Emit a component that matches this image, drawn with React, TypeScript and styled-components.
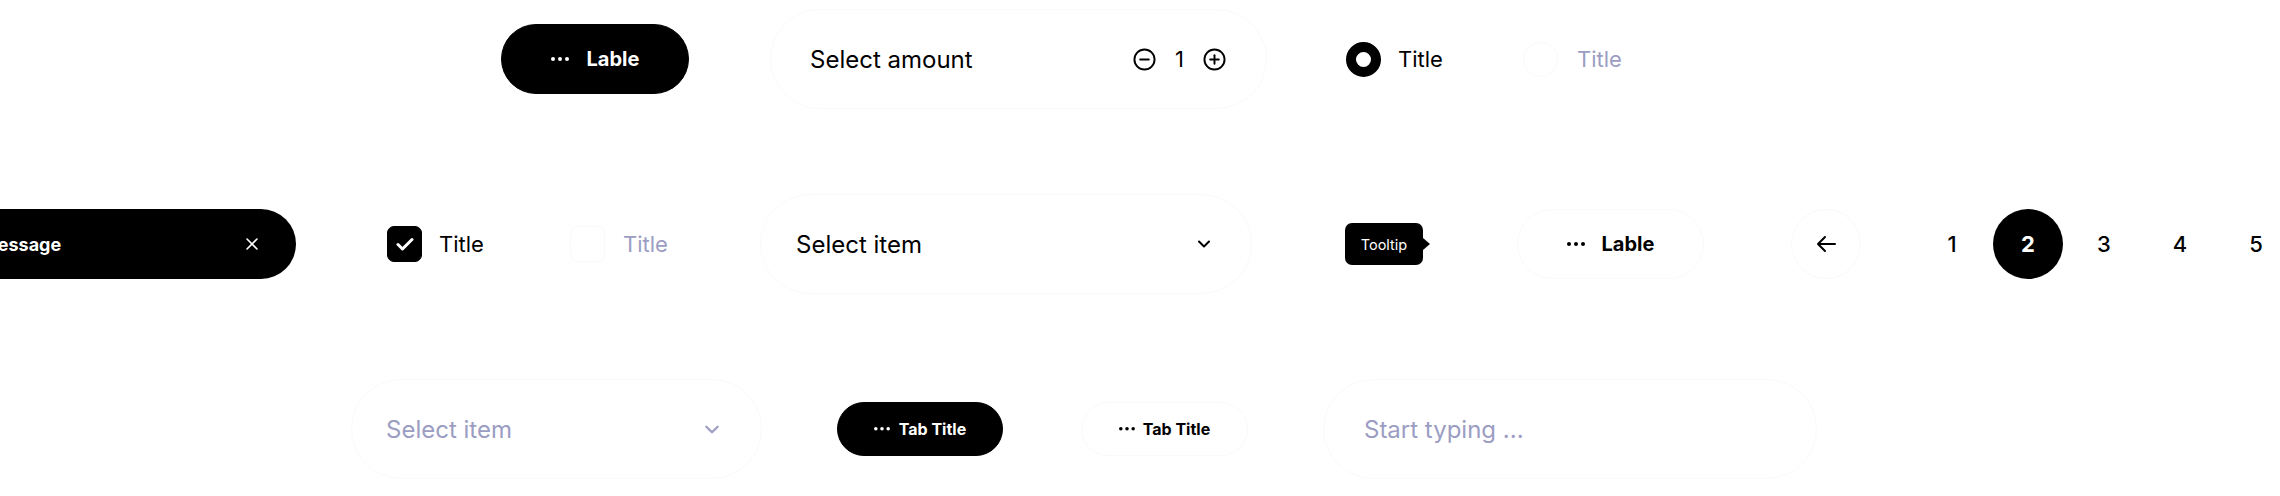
import React from "react";
import styled, { createGlobalStyle, css } from "styled-components";

const GlobalStyle = createGlobalStyle`
  html, body {
    margin: 0;
    padding: 0;
    background: #fff;
  }
  body {
    font-family: Inter, "Noto Sans", sans-serif;
    color: #000;
    overflow: hidden;
  }
`;

const MUTED = "#9b9dc3";
const FAINT = "#fafafb";

type Offset = { $ml?: number };
const offset = css<Offset>`
  margin-left: ${(p) => p.$ml ?? 0}px;
  flex-shrink: 0;
`;

const Canvas = styled.div`
  width: 2280px;
  height: 496px;
  overflow: hidden;
  box-sizing: border-box;
  padding-top: 9px;
  display: flex;
  flex-direction: column;
  gap: 85px;
`;

const Row = styled.div<{ $pl?: number }>`
  display: flex;
  align-items: center;
  height: 100px;
  flex-shrink: 0;
  padding-left: ${(p) => p.$pl ?? 0}px;
`;

const Pill = styled.div<Offset & { $ghost?: boolean; $w: number; $h: number; $size: number; $gap: number }>`
  ${offset};
  display: flex;
  align-items: center;
  justify-content: center;
  gap: ${(p) => p.$gap}px;
  box-sizing: border-box;
  width: ${(p) => p.$w}px;
  height: ${(p) => p.$h}px;
  border-radius: ${(p) => p.$h / 2}px;
  border: 1px solid ${(p) => (p.$ghost ? FAINT : "#000")};
  background: ${(p) => (p.$ghost ? "#fff" : "#000")};
  color: ${(p) => (p.$ghost ? "#000" : "#fff")};
  font-size: ${(p) => p.$size}px;
  font-weight: 700;
`;

const Field = styled.div<Offset & { $w: number; $pl: number; $pr: number }>`
  ${offset};
  display: flex;
  align-items: center;
  justify-content: space-between;
  box-sizing: border-box;
  width: ${(p) => p.$w}px;
  height: 100px;
  padding: 0 ${(p) => p.$pr}px 0 ${(p) => p.$pl}px;
  border: 1px solid ${FAINT};
  border-radius: 50px;
`;

const FieldText = styled.span<{ $muted?: boolean }>`
  font-size: 24px;
  color: ${(p) => (p.$muted ? MUTED : "#000")};
`;

const Stepper = styled.div`
  display: flex;
  align-items: center;
  gap: 19px;
  font-size: 22px;
`;

const Option = styled.div<Offset & { $w: number; $gap: number }>`
  ${offset};
  display: flex;
  align-items: center;
  gap: ${(p) => p.$gap}px;
  width: ${(p) => p.$w}px;
`;

const OptionLabel = styled.span<{ $muted?: boolean }>`
  font-size: 22px;
  color: ${(p) => (p.$muted ? MUTED : "#000")};
`;

const Radio = styled.span<{ $on?: boolean }>`
  box-sizing: border-box;
  width: 35px;
  height: 35px;
  border-radius: 50%;
  border: ${(p) => (p.$on ? "10.5px solid #000" : `1px solid ${FAINT}`)};
  background: #fff;
`;

const Checkbox = styled.span<{ $on?: boolean }>`
  display: flex;
  align-items: center;
  justify-content: center;
  box-sizing: border-box;
  width: 35px;
  height: 36px;
  border-radius: 7px;
  background: ${(p) => (p.$on ? "#000" : "#fff")};
  border: 1px solid ${(p) => (p.$on ? "#000" : FAINT)};
`;

const Snackbar = styled.div<Offset>`
  ${offset};
  display: flex;
  align-items: center;
  justify-content: space-between;
  box-sizing: border-box;
  width: 360px;
  height: 70px;
  padding: 0 38px 0 45px;
  border-radius: 35px;
  background: #000;
  color: #fff;
  font-size: 18px;
  font-weight: 700;
`;

const Tooltip = styled.div<Offset>`
  ${offset};
  position: relative;
  display: flex;
  align-items: center;
  justify-content: center;
  width: 78px;
  height: 42px;
  border-radius: 7px;
  background: #000;
  color: #fff;
  font-size: 14.5px;

  &::after {
    content: "";
    position: absolute;
    right: -7px;
    top: 50%;
    margin-top: -6px;
    border-style: solid;
    border-width: 6px 0 6px 7px;
    border-color: transparent transparent transparent #000;
  }
`;

const RoundButton = styled.div<Offset>`
  ${offset};
  display: flex;
  align-items: center;
  justify-content: center;
  box-sizing: border-box;
  width: 70px;
  height: 70px;
  border-radius: 50%;
  border: 1px solid ${FAINT};
`;

const Pages = styled.div<Offset>`
  ${offset};
  display: flex;
  gap: 6px;
`;

const Page = styled.div<{ $active?: boolean }>`
  display: flex;
  align-items: center;
  justify-content: center;
  width: 70px;
  height: 70px;
  border-radius: 50%;
  background: ${(p) => (p.$active ? "#000" : "transparent")};
  color: ${(p) => (p.$active ? "#fff" : "#000")};
  font-size: 22px;
  font-weight: ${(p) => (p.$active ? 700 : 500)};
`;

const Dots = ({ w = 18, r = 2 }: { w?: number; r?: number }) => (
  <svg width={w} height={r * 2} viewBox={`0 0 ${w} ${r * 2}`} fill="currentColor">
    <circle cx={r} cy={r} r={r} />
    <circle cx={w / 2} cy={r} r={r} />
    <circle cx={w - r} cy={r} r={r} />
  </svg>
);

const Chevron = ({ color = "#000", w = 12 }: { color?: string; w?: number }) => (
  <svg width={w} height={w / 2 + 2} viewBox="0 0 12 8" fill="none" stroke={color} strokeWidth="2" strokeLinecap="round" strokeLinejoin="round">
    <path d="M1 1.5l5 5 5-5" />
  </svg>
);

const CircleIcon = ({ plus }: { plus?: boolean }) => (
  <svg width="23" height="23" viewBox="0 0 24 24" fill="none" stroke="#000" strokeWidth="2" strokeLinecap="round">
    <circle cx="12" cy="12" r="10.5" />
    <path d="M7.5 12h9" />
    {plus && <path d="M12 7.5v9" />}
  </svg>
);

const Check = () => (
  <svg width="18" height="14" viewBox="0 0 18 14" fill="none" stroke="#fff" strokeWidth="3" strokeLinecap="round" strokeLinejoin="round">
    <path d="M2 7.5l4.5 4.5L16 2.5" />
  </svg>
);

const Close = () => (
  <svg width="12" height="12" viewBox="0 0 12 12" fill="none" stroke="#fff" strokeWidth="1.6" strokeLinecap="round">
    <path d="M1 1l10 10M11 1L1 11" />
  </svg>
);

const ArrowLeft = () => (
  <svg width="20" height="18" viewBox="0 0 20 18" fill="none" stroke="#000" strokeWidth="2" strokeLinecap="round" strokeLinejoin="round">
    <path d="M19 9H2M9 2L2 9l7 7" />
  </svg>
);

export default function App() {
  return (
    <>
      <GlobalStyle />
      <Canvas>
        <Row $pl={501}>
          <Pill $w={188} $h={70} $size={20} $gap={18}>
            <Dots />
            <span>Lable</span>
          </Pill>
          <Field $ml={81} $w={497} $pl={39} $pr={40}>
            <FieldText>Select amount</FieldText>
            <Stepper>
              <CircleIcon />
              <span>1</span>
              <CircleIcon plus />
            </Stepper>
          </Field>
          <Option $ml={79} $w={177} $gap={17}>
            <Radio $on />
            <OptionLabel>Title</OptionLabel>
          </Option>
          <Option $w={180} $gap={19}>
            <Radio />
            <OptionLabel $muted>Title</OptionLabel>
          </Option>
        </Row>

        <Row>
          <Snackbar $ml={-64}>
            <span>Message</span>
            <Close />
          </Snackbar>
          <Option $ml={91} $w={183} $gap={17}>
            <Checkbox $on>
              <Check />
            </Checkbox>
            <OptionLabel>Title</OptionLabel>
          </Option>
          <Option $w={190} $gap={18}>
            <Checkbox />
            <OptionLabel $muted>Title</OptionLabel>
          </Option>
          <Field $w={492} $pl={35} $pr={41}>
            <FieldText>Select item</FieldText>
            <Chevron />
          </Field>
          <Tooltip $ml={93}>Tooltip</Tooltip>
          <Pill $ghost $ml={94} $w={187} $h={70} $size={20} $gap={17}>
            <Dots />
            <span>Lable</span>
          </Pill>
          <RoundButton $ml={87}>
            <ArrowLeft />
          </RoundButton>
          <Pages $ml={56}>
            <Page>1</Page>
            <Page $active>2</Page>
            <Page>3</Page>
            <Page>4</Page>
            <Page>5</Page>
          </Pages>
        </Row>

        <Row $pl={351}>
          <Field $w={411} $pl={34} $pr={42}>
            <FieldText $muted>Select item</FieldText>
            <Chevron color={MUTED} w={14} />
          </Field>
          <Pill $ml={75} $w={166} $h={54} $size={16} $gap={9}>
            <Dots w={16} r={1.8} />
            <span>Tab Title</span>
          </Pill>
          <Pill $ghost $ml={78} $w={167} $h={54} $size={16} $gap={8}>
            <Dots w={16} r={1.8} />
            <span>Tab Title</span>
          </Pill>
          <Field $ml={75} $w={494} $pl={40} $pr={40}>
            <FieldText $muted>Start typing ...</FieldText>
          </Field>
        </Row>
      </Canvas>
    </>
  );
}
